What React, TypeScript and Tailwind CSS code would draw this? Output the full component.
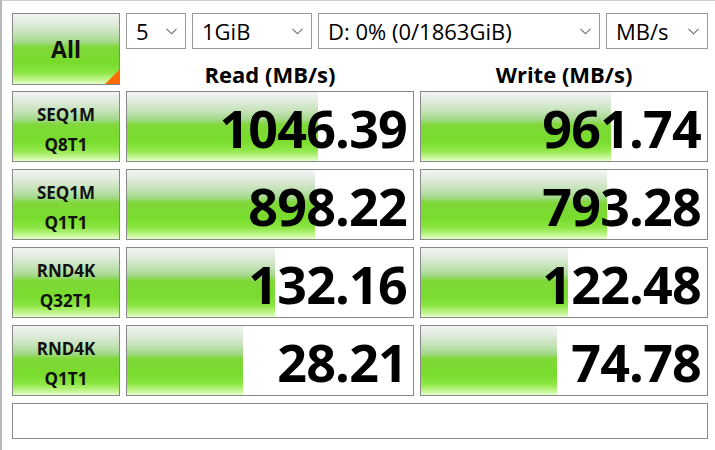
import React from "react";

const GRAD =
  "linear-gradient(to bottom, #f3f5f3 0%, #e2ece0 12%, #c4e2b6 28%, #a3d98a 40%, #80d83a 47%, #78dc2c 70%, #8ee646 84%, #c2f58e 94%, #e4ffcc 100%)";

function Chevron() {
  return (
    <svg width="11" height="7" viewBox="0 0 11 7" className="shrink-0">
      <path d="M0.5 0.8 L5.5 5.8 L10.5 0.8" fill="none" stroke="#6b6b6b" strokeWidth="1.1" />
    </svg>
  );
}

function Combo({ w, label }: { w: string; label: string }) {
  return (
    <div className={`${w} h-[36px] border border-[#9a9a9a] bg-white flex items-center justify-between pl-[9px] pr-[8px]`}>
      <span className="text-[22px] leading-none text-black">{label}</span>
      <Chevron />
    </div>
  );
}

function Label({ a, b }: { a: string; b: string }) {
  return (
    <div
      className="w-[108px] h-[71px] border border-[#888] flex flex-col items-center justify-center gap-[8px] pt-[6px]"
      style={{ background: GRAD }}
    >
      <span className="text-[17px] font-[750] leading-[22px] text-[#111]">{a}</span>
      <span className="text-[17px] font-[750] leading-[22px] text-[#111]">{b}</span>
    </div>
  );
}

function Cell({ value, fill }: { value: string; fill: number }) {
  return (
    <div className="relative w-[288px] h-[71px] border border-[#888] bg-white flex items-center justify-end pr-[6px] pt-[2px]">
      <div className="absolute left-0 top-0 bottom-0" style={{ width: fill, background: GRAD }} />
      <span className="relative text-[52px] font-[750] leading-none text-black tracking-[-0.8px]">{value}</span>
    </div>
  );
}

const rows = [
  { a: "SEQ1M", b: "Q8T1", r: "1046.39", rf: 191, w: "961.74", wf: 190 },
  { a: "SEQ1M", b: "Q1T1", r: "898.22", rf: 188, w: "793.28", wf: 186 },
  { a: "RND4K", b: "Q32T1", r: "132.16", rf: 148, w: "122.48", wf: 147 },
  { a: "RND4K", b: "Q1T1", r: "28.21", rf: 116, w: "74.78", wf: 136 },
];

export default function App() {
  return (
    <div
      className="w-[715px] h-[450px] bg-white border-t border-t-[#cfcfcf] border-l-2 border-l-[#b8b8b8] pl-[10px] pt-[12px] overflow-hidden"
      style={{ fontFamily: "'Open Sans', 'Noto Sans', sans-serif" }}
    >
      <div className="flex gap-[6px]">
        <div
          className="relative w-[108px] h-[72px] border border-[#888] flex items-center justify-center"
          style={{ background: GRAD }}
        >
          <span className="text-[23px] font-[750] leading-none text-[#111]">All</span>
          <svg className="absolute right-0 bottom-0" width="14" height="14" viewBox="0 0 14 14">
            <polygon points="14,0 14,14 0,14" fill="#ff6a00" />
          </svg>
        </div>
        <div className="flex flex-col">
          <div className="flex gap-[6px]">
            <Combo w="w-[60px]" label="5" />
            <Combo w="w-[120px]" label="1GiB" />
            <Combo w="w-[282px]" label="D: 0% (0/1863GiB)" />
            <Combo w="w-[102px]" label="MB/s" />
          </div>
          <div className="flex gap-[6px] h-[36px] items-end">
            <div className="w-[288px] text-center text-[22px] font-[750] leading-[28px] text-black -mb-[3px]">Read (MB/s)</div>
            <div className="w-[288px] text-center text-[22px] font-[750] leading-[28px] text-black -mb-[3px]">Write (MB/s)</div>
          </div>
        </div>
      </div>
      <div className="flex flex-col gap-[7px] mt-[6px]">
        {rows.map((r, i) => (
          <div key={i} className="flex gap-[6px]">
            <Label a={r.a} b={r.b} />
            <Cell value={r.r} fill={r.rf} />
            <Cell value={r.w} fill={r.wf} />
          </div>
        ))}
        <div className="w-[696px] h-[36px] border border-[#888] bg-white" />
      </div>
    </div>
  );
}
